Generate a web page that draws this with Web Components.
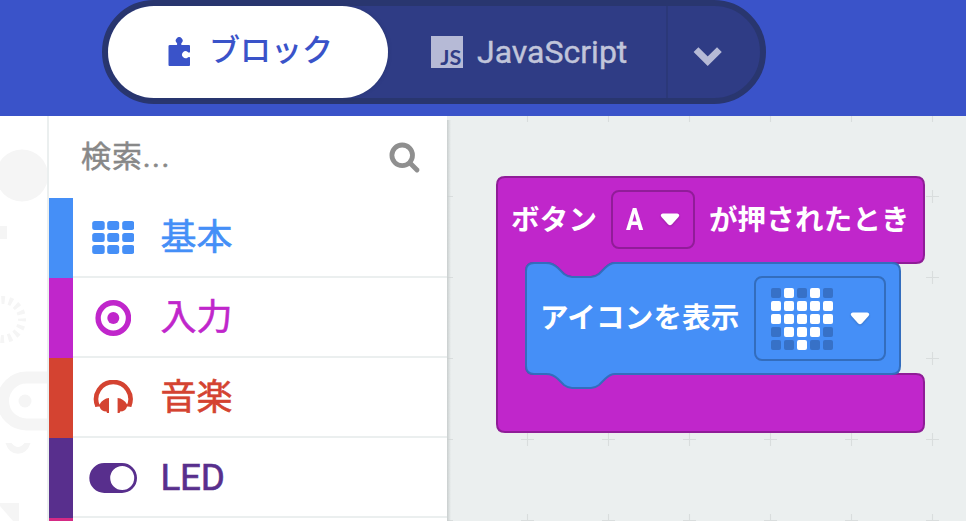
<!DOCTYPE html>
<html lang="ja"><head><meta charset="utf-8"><title>エディター</title>
<style>html,body{margin:0;height:521px;overflow:hidden;background:#fff}</style></head><body>
<code-editor></code-editor>
<script>
const define=(name,html)=>{
  const t=document.createElement('template');t.innerHTML=html;
  customElements.define(name,class extends HTMLElement{
    constructor(){super();this.attachShadow({mode:'open'}).append(t.content.cloneNode(true));}
  });
};

define('mode-switch',`<style>
:host{display:block;box-sizing:border-box;width:664px;height:104px;border:6px solid #29366f;border-radius:52px;background:#2f3c85;color:#c1c5da;font-size:32px}
.row{display:flex;height:92px}
.on{display:flex;width:280px;background:#fff;border-radius:46px;color:#3a53c9;box-shadow:1px 0 3px #29366faa}
.on svg{margin:31px 0 0 60px}.on span{margin:22px 0 0 18px;line-height:46px;font-size:31px;font-weight:500;white-space:nowrap}
.js{display:flex;box-sizing:border-box;width:280px;border-right:2px solid #2b3879}
.badge{margin:30px 0 0 43px;width:32px;height:32px;background:#b6bad6;flex:none;box-sizing:border-box;color:#2f3c85;font:bold 21.500px/38px Lato,sans-serif;padding:2px 2px 0 0;text-align:right;letter-spacing:-.2px}
.js span{margin:22.500px 0 0 14px;line-height:46px;-webkit-text-stroke:.4px}
.more svg{display:block;margin:40px 0 0 24px}
</style><div class="row"><div class="on">
<svg width="23" height="30" viewBox="0 0 23 30"><path fill="currentColor" d="M2 8H8.8Q9.600 7 8.800 6A3.400 3.400 0 1 1 13.600 6Q12.800 7 13.600 8H21Q22 8 22 9V15.300Q20.500 16 19.800 15A3.500 3.500 0 1 0 19.800 20.400Q20.500 19.500 22 20.200V28Q22 29 21 29H1.500Q.5 29 .5 28V9Q.5 8 2 8Z"/></svg><span>ブロック</span></div>
<div class="js"><div class="badge">JS</div><span>JavaScript</span></div>
<div class="more"><svg width="32" height="21" viewBox="0 0 32 21"><path d="M4 3.700 15.700 15.200 27.400 3.700" fill="none" stroke="#b6bad6" stroke-width="6.800"/></svg></div></div>`);

define('app-header',`<style>:host{display:flex;height:116px;padding-left:102px;background:#3a53c9}</style><slot></slot>`);

define('simulator-strip',`<style>:host{display:block;box-sizing:border-box;width:49px;border-right:2px solid #ebefef;background:#fff}svg{display:block}</style>
<svg width="47" height="405" viewBox="0 116 47 405" fill="#f5f5f5"><circle cx="22" cy="175.500" r="26"/><path d="M0 226h7v13H0zM0 503h19v18H13L0 506z"/>
<circle cx="2.500" cy="319.500" r="19.500" fill="none" stroke="#f5f5f5" stroke-width="8" stroke-dasharray="3.600 4.058" stroke-dashoffset="1.800"/>
<rect x="3" y="377.500" width="70" height="47" rx="23.500" fill="none" stroke="#f5f5f5" stroke-width="12"/><circle cx="25" cy="401" r="6.500"/>
<path d="M5.500 443H11.500Q18 451 24.500 443H30.500Q27 453.800 18 453.800T5.500 443Z"/></svg>`);

define('search-box',`<style>:host{display:flex;justify-content:space-between;height:82px;color:#888;font-size:30px}
span{margin:19px 0 0 32px;line-height:44px;letter-spacing:.9px;-webkit-text-stroke:.5px}.dots{letter-spacing:1.400px;margin:0}svg{margin:26px 26px 0 0}</style>
<span>検索<span class="dots">...</span></span><svg width="32" height="32" viewBox="0 0 32 32" fill="none" stroke="#8f8f8f"><circle cx="13.200" cy="13.300" r="10.300" stroke-width="4.800"/><path d="m21 21 7 7" stroke-width="4.800" stroke-linecap="round"/></svg>`);

define('category-row',`<style>:host{display:flex;height:80px;color:var(--c)}
.bar{width:24px;background:var(--c);flex:none}.body{flex:1;display:flex;border-bottom:2px solid #ebefef;box-sizing:border-box}
.icon{display:flex;width:80px;height:80px;align-items:center;justify-content:center}
.label{margin:2px 0 0 7.500px;line-height:76px;height:76px;font-size:36px;white-space:nowrap;-webkit-text-stroke:.6px}</style>
<div class="bar"></div><div class="body"><div class="icon"><slot name="icon"></slot></div><div class="label"><slot></slot></div></div>`);

define('tool-box',`<style>:host{display:block;width:398px;height:405px;overflow:hidden;background:#fff}svg{display:block;fill:currentColor}.latin{font-size:36.800px;letter-spacing:-.2px}</style>
<search-box></search-box>
<category-row style="--c:#458ff7"><svg slot="icon" width="42" height="35" viewBox="0 0 42 35"><g transform="translate(.2 0)">
<rect width="12.500" height="9" rx="2.500"/><rect x="15" width="12" height="9" rx="2.500"/><rect x="30" width="12" height="9" rx="2.500"/><rect y="12" width="12.500" height="9" rx="2.500"/><rect x="15" y="12" width="12" height="9" rx="2.500"/><rect x="30" y="12" width="12" height="9" rx="2.500"/><rect y="24" width="12.500" height="9" rx="2.500"/><rect x="15" y="24" width="12" height="9" rx="2.500"/><rect x="30" y="24" width="12" height="9" rx="2.500"/></g></svg>基本</category-row>
<category-row style="--c:#c026cb"><svg slot="icon" width="36" height="36" viewBox="0 0 36 36"><circle cx="18.300" cy="18" r="15.200" fill="none" stroke="currentColor" stroke-width="5.400"/><circle cx="18.300" cy="18" r="6"/></svg>入力</category-row>
<category-row style="--c:#d44331"><svg slot="icon" width="40" height="36" viewBox="0 0 40 36"><path d="M4.500 26A17.200 17.200 0 1 1 36.100 26" fill="none" stroke="currentColor" stroke-width="4.600"/><path d="M16 18V33H14L13.500 31.500Q8 31.500 6.500 26.500L2.300 26.700 2.500 24 6.500 24.500Q10 18.500 16 18ZM24.600 18V33H26.600L27.100 31.500Q32.600 31.500 34.100 26.500L38.300 26.700 38.100 24 34.100 24.500Q30.600 18.500 24.600 18Z"/></svg>音楽</category-row>
<category-row style="--c:#582f8d"><svg slot="icon" width="48" height="30" viewBox="0 0 48 30"><path fill-rule="evenodd" d="M15.300 0H33A15 15 0 0 1 33 30H15.300A15 15 0 0 1 15.300 0ZM33.200 3A12 12 0 1 0 33.200 27 12 12 0 0 0 33.200 3Z"/></svg><span class="latin">LED</span></category-row>
<category-row style="--c:#d52a85"></category-row>`);

define('block-label',`<style>:host{display:block;color:#fff;font-weight:bold;font-size:28.500px;letter-spacing:.2px;line-height:42px;white-space:nowrap}</style><slot></slot>`);
define('drop-field',`<style>:host{box-sizing:border-box;display:flex;align-items:center;border:2px solid var(--line);border-radius:8px;flex:none}
svg{flex:none;filter:drop-shadow(0 1px 1px #0003)}</style><slot></slot>
<svg width="20" height="13" viewBox="0 0 20 13"><path fill="#fff" d="M2.700.5H17.300Q20.500 1.500 18.500 4L12 11.300Q10 13 8 11.300L1.500 4Q-.5 1.500 2.700.5Z"/></svg>`);
define('led-heart',`<style>:host{display:grid;grid-template-columns:repeat(5,10px);grid-auto-rows:10px;gap:3px}i{border-radius:2px;background:#3771c7}i.o{background:#fff}</style>`+[...'0101011111111110111000100'].map(v=>v==='1'?'<i class="o"></i>':'<i></i>').join(''));

define('event-block',`<style>:host{display:grid;grid-template:86px 112px 59px/429px;width:430px;height:258px}
svg{grid-area:1/1/4/2;display:block;overflow:visible}
.top{grid-area:1/1;display:flex;z-index:1}.in{grid-area:2/1;display:flex;z-index:1}
.top>block-label{margin-top:23.500px}.top>block-label:first-child{margin-left:15px}.top drop-field{--line:#911c99;width:84px;height:59px;margin:14px 14px 0 13.800px;padding-left:13px;gap:13px}
.a{width:21px;font-size:30.500px;transform:scaleX(.84);transform-origin:0 50%;margin-top:1px}.in block-label{margin:36px 0 0 44px}.in drop-field{--line:#336dbd;width:132px;height:85px;margin:14px 0 0 15px;padding-left:15px;gap:17px}</style>
<svg width="430" height="258" viewBox="0 0 430 258"><path fill="#c026cb" stroke="#8f1d97" stroke-width="2" d="M9 1H420Q428 1 428 9V79Q428 87 420 87H119Q114 87 109 92L103 98Q99 101 95 101H76Q72 101 68 98L62 92Q57 87 50 87H38Q30 87 30 95V190Q30 198 38 198H420Q428 198 428 206V248Q428 256 420 256H9Q1 256 1 248V9Q1 1 9 1Z"/>
<path fill="#458ff7" stroke="#336dbd" stroke-width="2" d="M38 87H50Q57 87 62 92L68 98Q72 101 76 101H95Q99 101 103 98L109 92Q114 87 119 87H396Q404 87 404 95V190Q404 198 396 198H119Q114 198 109 203L103 209Q99 212 95 212H76Q72 212 68 209L62 203Q57 198 50 198H38Q30 198 30 190V95Q30 87 38 87Z"/></svg>
<div class="top"><block-label>ボタン</block-label><drop-field><block-label class="a">A</block-label></drop-field><block-label>が押されたとき</block-label></div>
<div class="in"><block-label>アイコンを表示</block-label><drop-field><led-heart></led-heart></drop-field></div>`);

define('work-space',`<style>:host{display:block;position:relative;height:405px;overflow:hidden;background:#ebefef}
.grid{position:absolute;inset:0}event-block{position:absolute;left:49px;top:60px}.shade{position:absolute;left:0;top:4px;bottom:0;width:4px;background:linear-gradient(90deg,#c9cece,#ebefef00)}</style>
<svg class="grid" width="519" height="405"><defs><pattern id="p" x="-41" y="-41" width="81" height="81" patternUnits="userSpaceOnUse"><path d="M34 40.500h13M40.500 34v13" stroke="#d9dddd" stroke-width="1.200"/></pattern></defs><rect width="519" height="405" fill="url(#p)"/></svg><div class="shade"></div><event-block></event-block>`);

define('code-editor',`<style>:host{display:block;width:966px;height:521px;overflow:hidden;font-family:Roboto,"Noto Sans CJK JP",sans-serif}.main{display:grid;grid-template-columns:49px 398px 519px;height:405px}</style>
<app-header><mode-switch></mode-switch></app-header><div class="main"><simulator-strip></simulator-strip><tool-box></tool-box><work-space></work-space></div>`);
</script></body></html>
